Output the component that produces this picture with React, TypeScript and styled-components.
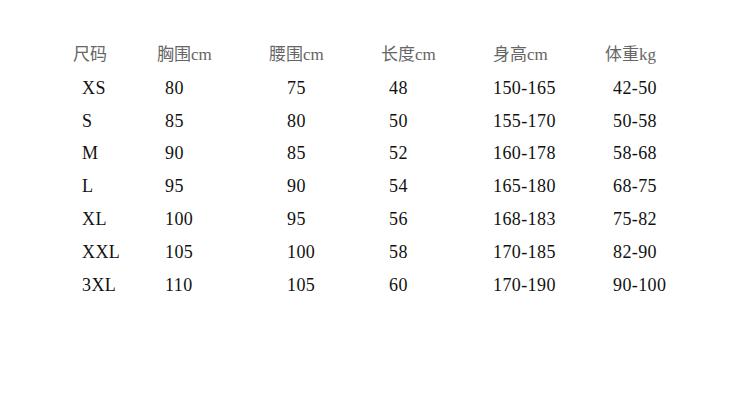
import styled, { createGlobalStyle } from 'styled-components'

const GlobalStyle = createGlobalStyle`
  body {
    margin: 0;
    background: #fff;
  }
`

const columns = [
  { title: '尺码', indent: 9 },
  { title: '胸围cm', indent: 8 },
  { title: '腰围cm', indent: 18 },
  { title: '长度cm', indent: 8 },
  { title: '身高cm', indent: 0 },
  { title: '体重kg', indent: 8 },
]

const rows = [
  ['XS', '80', '75', '48', '150-165', '42-50'],
  ['S', '85', '80', '50', '155-170', '50-58'],
  ['M', '90', '85', '52', '160-178', '58-68'],
  ['L', '95', '90', '54', '165-180', '68-75'],
  ['XL', '100', '95', '56', '168-183', '75-82'],
  ['XXL', '105', '100', '58', '170-185', '82-90'],
  ['3XL', '110', '105', '60', '170-190', '90-100'],
]

const App = () => {
  return (
    <Page>
      <GlobalStyle />
      <SizeTable>
        {columns.map((col) => (
          <HeadCell key={col.title}>{col.title}</HeadCell>
        ))}
        {rows.map((row) =>
          row.map((value, i) => (
            <Cell key={row[0] + i} $indent={columns[i].indent}>
              {value}
            </Cell>
          ))
        )}
      </SizeTable>
    </Page>
  )
}

export default App

const Page = styled.div`
  width: 750px;
  height: 400px;
  background: #fff;
  padding: 42px 0 0 73px;
  box-sizing: border-box;
`

const SizeTable = styled.div`
  display: grid;
  grid-template-columns: 84px repeat(5, 112px);
  grid-auto-rows: 32.8px;
  font-family: 'Liberation Serif', 'Noto Sans CJK SC', serif;
`

const HeadCell = styled.div`
  font-size: 17px;
  color: #666;
  line-height: 26px;
  white-space: nowrap;
`

const Cell = styled.div<{ $indent: number }>`
  font-size: 18px;
  letter-spacing: 0.4px;
  color: #111;
  padding-left: ${(p) => p.$indent}px;
  line-height: 26px;
  white-space: nowrap;
`
